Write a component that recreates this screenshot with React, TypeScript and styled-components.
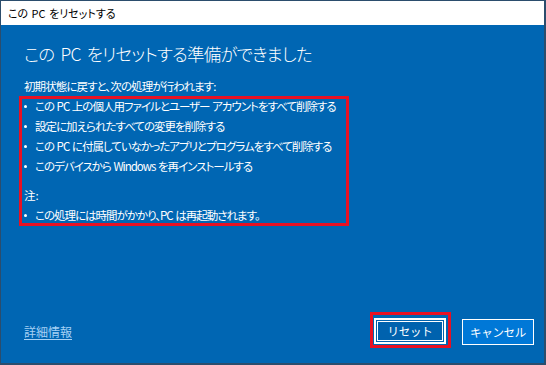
import styled, { createGlobalStyle } from "styled-components";

const GlobalStyle = createGlobalStyle`
  html, body {
    margin: 0;
    padding: 0;
    background: #ffffff;
  }
  body {
    font-family: "Noto Sans CJK JP", "Noto Sans", sans-serif;
    font-feature-settings: "palt";
  }
`;

const Window = styled.div`
  box-sizing: border-box;
  width: 546px;
  height: 365px;
  display: flex;
  flex-direction: column;
  border: 1px solid #2b4d6d;
  border-right-width: 2px;
  border-bottom-width: 2px;
  background: #0066b3;
`;

const TitleBar = styled.div`
  height: 24px;
  flex: none;
  display: flex;
  align-items: center;
  padding-left: 7px;
  background: #ffffff;
  color: #000000;
  font-size: 11px;
  word-spacing: 1px;
`;

const Panel = styled.div`
  flex: 1;
  display: flex;
  flex-direction: column;
  padding: 0 10px 15px 23px;
  color: #ffffff;
`;

const Heading = styled.h1`
  margin: 16px 0 0;
  font-size: 17.5px;
  line-height: 26px;
  font-weight: 300;
  letter-spacing: -0.8px;
  word-spacing: 3px;
  white-space: nowrap;
`;

const Intro = styled.p`
  margin: 9px 0 0;
  font-size: 11.5px;
  line-height: 20px;
  letter-spacing: -0.9px;
`;

const Highlight = styled.div`
  box-sizing: border-box;
  width: 330px;
  margin-left: -5px;
  border: 3px solid #e81123;
  padding: 0 0 1px 2px;
`;

const Item = styled.div`
  display: flex;
  align-items: center;
  margin-top: 6px;
  font-size: 11.5px;
  line-height: 14px;
  letter-spacing: -1px;
  word-spacing: 1px;
  white-space: pre;
  &:first-child {
    margin-top: 0;
  }
`;

const Dot = styled.span`
  width: 3px;
  height: 3px;
  border-radius: 50%;
  background: #ffffff;
  flex: none;
  margin-right: 8px;
`;

const Note = styled.div`
  margin-top: 15px;
  font-size: 11.5px;
  line-height: 14px;
`;

const Footer = styled.div`
  margin-top: auto;
  display: flex;
  align-items: center;
`;

const Link = styled.a`
  font-size: 12px;
  color: #a6d1f5;
  text-decoration: underline;
  text-underline-offset: 2px;
  margin-right: auto;
  margin-top: 2px;
`;

const Focus = styled.span`
  display: flex;
  border: 3px solid #e81123;
  padding: 3px 2px 1px 1px;
`;

const Button = styled.button<{ $primary?: boolean }>`
  box-sizing: border-box;
  width: 72px;
  height: 26px;
  font-family: inherit;
  font-size: 11.5px;
  letter-spacing: -0.3px;
  color: #ffffff;
  background: ${(p) => (p.$primary ? "#0062ae" : "#0078d7")};
  border: ${(p) => (p.$primary ? "2px" : "1px")} solid #ffffff;
  box-shadow: ${(p) =>
    p.$primary ? "inset 0 0 0 1px #0062ae, inset 0 0 0 2px #ffffff" : "none"};
  padding: 0;
`;

const Cancel = styled(Button)`
  margin-left: 11px;
  margin-top: 3px;
`;

const bullets = [
  "この PC 上の個人用ファイルとユーザー アカウントをすべて削除する",
  "設定に加えられたすべての変更を削除する",
  "この PC に付属していなかったアプリとプログラムをすべて削除する",
  "このデバイスから Windows を再インストールする",
];

export default function App() {
  return (
    <>
      <GlobalStyle />
      <Window>
        <TitleBar>この PC をリセットする</TitleBar>
        <Panel>
          <Heading>この PC をリセットする準備ができました</Heading>
          <Intro>初期状態に戻すと、次の処理が行われます:</Intro>
          <Highlight>
            {bullets.map((b) => (
              <Item key={b}>
                <Dot />
                {b}
              </Item>
            ))}
            <Note>注:</Note>
            <Item>
              <Dot />
              この処理には時間がかかり、PC は再起動されます。
            </Item>
          </Highlight>
          <Footer>
            <Link href="#">詳細情報</Link>
            <Focus>
              <Button $primary>リセット</Button>
            </Focus>
            <Cancel>キャンセル</Cancel>
          </Footer>
        </Panel>
      </Window>
    </>
  );
}
